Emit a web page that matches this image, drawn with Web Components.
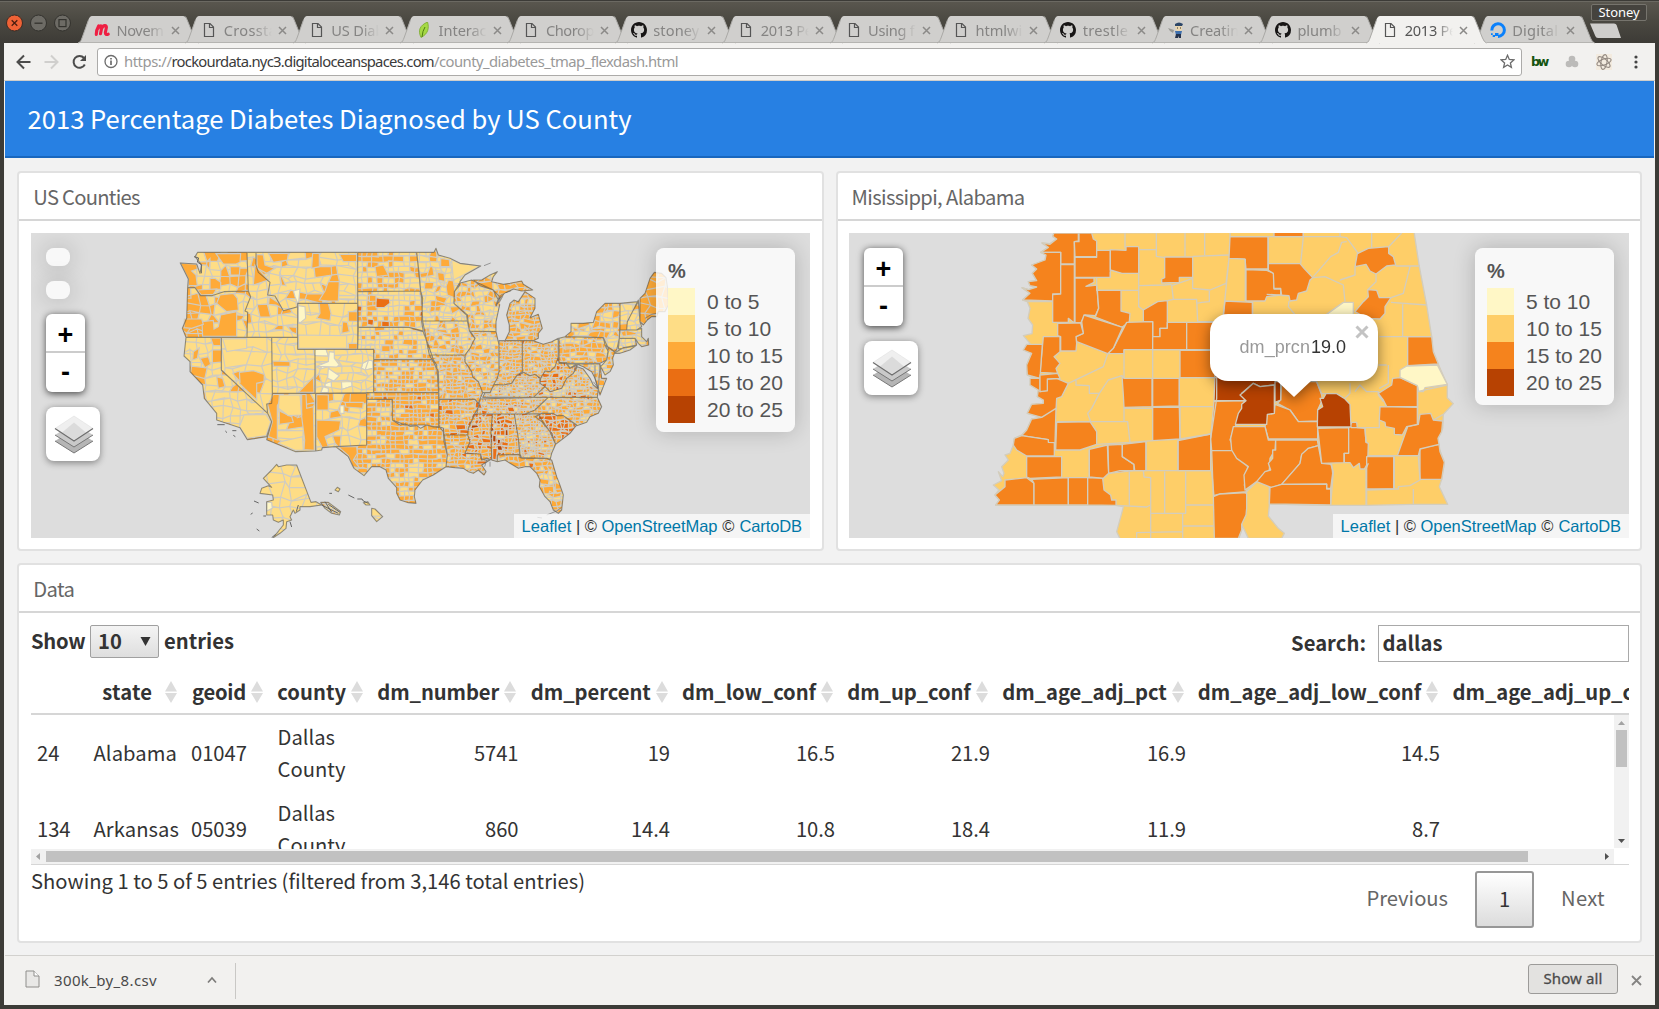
<!DOCTYPE html>
<html lang="en">
<head>
<meta charset="utf-8">
<title>2013 Percentage Diabetes Diagnosed by US County</title>
<style>
html,body{margin:0;padding:0;width:1659px;height:1009px;overflow:hidden;background:#3c3b37}
</style>
</head>
<body>
<browser-window>
  <tab-strip slot="tabs">
    <browser-tab icon="meetup" n="Novem"></browser-tab>
    <browser-tab icon="doc" n="Crossta"></browser-tab>
    <browser-tab icon="doc" n="US Diab"></browser-tab>
    <browser-tab icon="leaf" n="Interac"></browser-tab>
    <browser-tab icon="doc" n="Chorop"></browser-tab>
    <browser-tab icon="github" n="stoney"></browser-tab>
    <browser-tab icon="doc" n="2013 Pe"></browser-tab>
    <browser-tab icon="doc" n="Using f"></browser-tab>
    <browser-tab icon="doc" n="htmlwi"></browser-tab>
    <browser-tab icon="github" n="trestle"></browser-tab>
    <browser-tab icon="person" n="Creatin"></browser-tab>
    <browser-tab icon="github" n="plumb"></browser-tab>
    <browser-tab icon="doc" n="2013 Pe" active></browser-tab>
    <browser-tab icon="ocean" n="Digital"></browser-tab>
  </tab-strip>
  <address-bar slot="toolbar"></address-bar>
  <dash-board slot="page"></dash-board>
  <download-bar slot="downloads"></download-bar>
</browser-window>

<script>
const SANS = '"Noto Sans CJK SC","Noto Sans CJK JP",sans-serif';
const UI = '"Noto Sans","Open Sans",sans-serif';
const fits = [];

function define(name, render, after) {
  customElements.define(name, class extends HTMLElement {
    connectedCallback() {
      if (this.shadowRoot) return;
      this.attachShadow({ mode: 'open' }).innerHTML = render(this);
      if (after) after(this);
    }
  });
}

/* Text that spreads its letters to fill a given advance width. */
define('fit-text', el => `<style>:host{display:inline-block;white-space:pre;width:${el.getAttribute('w')}px}</style><span><slot></slot></span>`, el => fits.push(el));

const f = (w, t, cls = '') => `<fit-text w="${w}" class="${cls}">${t}</fit-text>`;

/* ---------- window frame ---------- */
define('browser-window', () => `
<style>
:host{display:flex;flex-direction:column;box-sizing:border-box;width:1659px;height:1009px;overflow:hidden;background:#3c3b37;position:relative}
.body{display:flex;flex-direction:column;margin:0 4px 4px 4px;padding:0 1px;height:962px;background:#f2f1ef}
</style>
<slot name="tabs"></slot>
<div class="body"><slot name="toolbar"></slot><slot name="page"></slot><slot name="downloads"></slot></div>`);

define('tab-strip', () => `
<style>
:host{display:flex;box-sizing:border-box;height:43px;background:linear-gradient(#5a574f,#4b4942 45%,#3d3b36);border-top:1px solid #3c3b37;box-shadow:inset 0 1px #6b6962;font-family:${UI}}
.btns{display:flex;gap:7px;width:78px;box-sizing:border-box;padding:13px 0 0 6px;flex:none}
svg{display:block}
.tabs{display:flex;align-items:flex-end;flex:none}
.plus{margin:22px 0 0 8px}
.user{position:absolute;left:1591px;top:4px;width:54px;height:15px;border:1px solid #76746d;border-radius:2px;background:#45433e;color:#fff;font-size:13px;line-height:15px;text-align:center}
</style>
<div class="btns">
<svg width="17" height="18" viewBox="0 0 17 18"><circle cx="8.5" cy="9" r="8" fill="#ef6236" stroke="#3a2c25"/><path d="M5.7 6.2l5.6 5.6M11.3 6.2l-5.6 5.6" stroke="#4b1e10" stroke-width="1.3"/></svg>
<svg width="17" height="18" viewBox="0 0 17 18"><circle cx="8.5" cy="9" r="8" fill="#6d6b65" stroke="#33322e"/><path d="M4.5 9.2h8" stroke="#33322e" stroke-width="1.3"/></svg>
<svg width="17" height="18" viewBox="0 0 17 18"><circle cx="8.5" cy="9" r="8" fill="#6d6b65" stroke="#33322e"/><rect x="5" y="5.6" width="7" height="7" fill="none" stroke="#33322e" stroke-width="1.2"/></svg>
</div>
<div class="tabs"><slot></slot></div>
<svg class="plus" width="33" height="16"><path d="M1 0.5H25Q27 .5 27.6 2L32 15H9Q7 15 6.3 13Z" fill="#cfcecc"/></svg>
<div class="user">${f(41, 'Stoney')}</div>`);

const favicons = {
  doc: '<path d="M3.5 1.5H9L12.5 5V14.5H3.5Z" fill="none" stroke="#555" stroke-width="1.2"/><path d="M8.5 1.5V5.5H12.5" fill="none" stroke="#555" stroke-width="1.2"/>',
  meetup: '<path d="M2.3 12.5C2.2 9 4 5 4.7 3.8M4.2 6.2C6 2.8 8.3 3 7.7 6L6.5 11.8M7.6 6.6C9.3 2.6 13 2.8 12.3 6L11.4 10.2C11.1 12.4 12.6 13 14.2 12.2" fill="none" stroke="#ef1f43" stroke-width="3.1" stroke-linecap="round"/>',
  leaf: '<path d="M11.5 0C4 3.500 1.500 8 5 15.500C12 12 13.500 6 11.500 0Z" fill="#a5d944" stroke="#7aa92c" stroke-width=".8"/><path d="M9 5Q6.500 9 6 15" stroke="#4f7d12" fill="none"/>',
  github: '<path fill="#171515" d="M8 0C3.58 0 0 3.580 0 8c0 3.540 2.290 6.530 5.470 7.590.4.070.55-.17.55-.38 0-.19-.01-.82-.01-1.490-2.010.37-2.530-.49-2.690-.94-.09-.23-.48-.94-.82-1.130-.28-.15-.68-.52-.01-.53.63-.01 1.080.58 1.230.82.72 1.210 1.870.87 2.330.66.070-.52.28-.87.51-1.070-1.780-.2-3.640-.89-3.640-3.950 0-.87.31-1.590.82-2.150-.08-.2-.36-1.020.08-2.120 0 0 .67-.21 2.200.82.64-.18 1.320-.27 2-.27s1.360.09 2 .27c1.530-1.040 2.200-.82 2.200-.82.44 1.100.16 1.920.08 2.120.51.56.82 1.270.82 2.150 0 3.070-1.870 3.750-3.650 3.950.29.25.54.73.54 1.480 0 1.070-.01 1.930-.01 2.200 0 .21.15.46.55.38A8.010 8.010 0 0 0 16 8c0-4.420-3.580-8-8-8z"/>',
  person: '<path d="M7 2Q11-1 15 2L14 4H7Z" fill="#2d4668"/><path d="M7 4H14V8Q11 11 8 8Z" fill="#ead6b0"/><path d="M0 6L6 8L5 11L2 9Z" fill="#9a9a95"/><path d="M7 9H14L13 13H8Z" fill="#3d6fae"/><path d="M8 12H13V16H11L10.500 14L10 16H7Z" fill="#26344e"/><path d="M9 6h1M12 6h1" stroke="#333"/>',
  ocean: '<path d="M1.800 8.500A6.300 6.300 0 1 1 8 14.400" fill="none" stroke="#0a80fb" stroke-width="3"/><path d="M5 11h3.500v3H5zM2.700 13h2.300v2H2.700zM1 11.200h1.700V13H1z" fill="#0a80fb"/>'
};
const tabW = { Novem: 47, Crossta: 53, 'US Diab': 53, Interac: 48, Chorop: 48, stoney: 46, '2013 Pe': 52, 'Using f': 46.5, htmlwi: 47, trestle: 45.5, Creatin: 49, plumb: 44, Digital: 46 };

define('browser-tab', el => {
  const on = el.hasAttribute('active'), n = el.getAttribute('n'), bg = on ? '#f2f1ef' : '#d0cfcd';
  return `<style>
:host{display:block;position:relative;width:107.36px;height:27px;flex:none;z-index:${on ? 2 : 0}}
.bg{position:absolute;left:0;top:0;overflow:visible}
.row{position:relative;display:flex;align-items:center;height:27px;padding:0 0 0 16px;box-sizing:border-box}
.ic{width:16px;height:16px;margin-right:6.500px;margin-top:1px;flex:none}
.t{width:54px;font-size:14.600px;line-height:22px;color:${on ? '#555' : '#858483'};-webkit-mask-image:linear-gradient(90deg,#000 30px,transparent 48px);mask-image:linear-gradient(90deg,#000 30px,transparent 48px);flex:none}
.x{margin-left:0;flex:none;margin-top:1px}
</style>
<svg class="bg" width="121" height="27"><path d="M0 27C3 26 3 24 4 22L10.500 3.500Q11.800 0 14 0H105Q107.500 0 109 3.500L116.500 22Q118 26 121 27Z" fill="${bg}"/><path d="M107.500 0.500Q108.500 2 109 3.500L116.500 22Q118 26 120.500 27M0 27C3 26 3 24 4 22L10.500 4" fill="none" stroke="#aaa9a6"/>${on ? '' : '<path d="M1 26.500H120" stroke="#b5b4b1"/>'}</svg>
<div class="row"><svg class="ic" viewBox="0 0 16 16">${favicons[el.getAttribute('icon')]}</svg><div class="t">${f(tabW[n], n)}</div>
<svg class="x" width="9" height="9"><path d="M1 1L8 8M8 1L1 8" stroke="#8b8a88" stroke-width="1.500"/></svg></div>`;
});

define('address-bar', () => `
<style>
:host{display:flex;align-items:center;box-sizing:border-box;height:38px;background:#f2f1ef;border-bottom:1px solid #cfcecb;padding:0 10px 0 11.500px;font-family:${UI};margin:0 -1px}
.nav{display:flex;gap:13px;width:81.500px}
.box{display:flex;align-items:center;box-sizing:border-box;width:1425px;height:28px;background:#fff;border:1px solid #acaba9;border-radius:3px;padding:0 6px;font-size:14.800px;color:#999}
.url{margin-left:6px;flex:1;display:flex;line-height:24px;padding-bottom:1px}
b{font-weight:400;color:#3a3a3a}
.ext{display:flex;align-items:center;margin-left:9px}
.bw{font:900 12.500px/16px "DejaVu Sans",sans-serif;color:#15540f;width:17px;padding-top:1px}
</style>
<div class="nav">
<svg width="15" height="16"><path d="M14.500 8H2M8 1.500L1.500 8L8 14.500" fill="none" stroke="#4c4c4b" stroke-width="2"/></svg>
<svg width="15" height="16"><path d="M.5 8H13M7 1.500L13.500 8L7 14.500" fill="none" stroke="#d0cfcd" stroke-width="2"/></svg>
<svg width="15" height="16"><path d="M12.800 10.500A5.900 5.900 0 1 1 12 4" fill="none" stroke="#4c4c4b" stroke-width="2"/><path d="M14 1V7H8Z" fill="#4c4c4b"/></svg>
</div>
<div class="box">
<svg width="14" height="15"><circle cx="7" cy="7.500" r="6" fill="none" stroke="#6d6d6d" stroke-width="1.300"/><path d="M7 6.500V11M7 4V5.600" stroke="#6d6d6d" stroke-width="1.700"/></svg>
<div class="url">${f(47.5, 'https://')}<b>${f(262.500, 'rockourdata.nyc3.digitaloceanspaces.com')}</b>${f(244, '/county_diabetes_tmap_flexdash.html')}</div>
<svg width="15" height="15" viewBox="0 0 15 15"><path d="M7.500 1.300L9.300 5.500L13.800 5.900L10.400 8.900L11.400 13.300L7.500 11L3.600 13.300L4.600 8.900L1.200 5.900L5.700 5.500Z" fill="none" stroke="#6b6b6b" stroke-width="1.300"/></svg>
</div>
<div class="ext"><span class="bw">${f(16, 'bw')}</span>
<svg width="14" height="14" style="margin-left:17px"><circle cx="7" cy="4" r="3.300" fill="#bcbbb9"/><circle cx="4" cy="9" r="3.300" fill="#bcbbb9"/><circle cx="10" cy="9" r="3.300" fill="#bcbbb9"/></svg>
<svg width="18" height="18" viewBox="0 0 18 18" style="margin-left:16px"><rect x="1" y="1" width="16" height="16" fill="#f3ebdf"/><g fill="none" stroke="#948a82" stroke-width="1.100"><ellipse cx="9" cy="9" rx="3" ry="7.500" transform="rotate(10 9 9)"/><ellipse cx="9" cy="9" rx="3" ry="7.500" transform="rotate(70 9 9)"/><ellipse cx="9" cy="9" rx="3" ry="7.500" transform="rotate(130 9 9)"/></g></svg>
<svg width="4" height="16" style="margin-left:21px"><circle cx="2" cy="3" r="1.600" fill="#444"/><circle cx="2" cy="8" r="1.600" fill="#444"/><circle cx="2" cy="13" r="1.600" fill="#444"/></svg></div>`);

/* ---------- dashboard ---------- */
define('dash-board', () => `
<style>
:host{display:flex;flex-direction:column;height:874px;background:#f2f2f2;font-family:${SANS};color:#333}
header{box-sizing:border-box;height:77px;flex:none;background:#2780e3;border-bottom:2px solid #1967be;color:#fff;font-size:25.600px;line-height:40px;padding:17px 0 0 22.500px}
main{display:flex;flex-direction:column;gap:12px;padding:13px 12px 0 12px}
.row{display:flex;gap:12px}
</style>
<header>${f(604, '2013 Percentage Diabetes Diagnosed by US County')}</header>
<main>
<div class="row">
<dash-card h="380" w="807" name="US Counties" nw="106.500"><leaflet-map kind="us"></leaflet-map></dash-card>
<dash-card h="380" w="806" pl="11" name="Misissippi, Alabama" nw="173"><leaflet-map kind="south"></leaflet-map></dash-card>
</div>
<dash-card h="380" w="1625" name="Data" nw="41"><data-table></data-table></dash-card>
</main>`);

define('dash-card', el => `
<style>
:host{display:flex;flex-direction:column;box-sizing:border-box;width:${el.getAttribute('w')}px;height:${el.getAttribute('h')}px;background:#fff;border:2px solid #e1e1e1;border-radius:4px;flex:none}
h2{margin:0;box-sizing:border-box;height:48px;flex:none;border-bottom:2px solid #d6d6d6;font-weight:400;font-size:20.200px;line-height:30px;color:#666;padding:9px 0 0 ${el.getAttribute('pl') ? 13.5 : 14.3}px}
.in{padding:12px 12px 12px ${el.getAttribute('pl') || 12}px}
</style><h2>${f(el.getAttribute('nw'), el.getAttribute('name'))}</h2><div class="in"><slot></slot></div>`);

/* ---------- Leaflet-style widgets ---------- */
define('zoom-control', () => `
<style>:host{display:flex;flex-direction:column;width:39px;height:78px;background:#fff;border-radius:6px;box-shadow:0 1.500px 7px rgba(0,0,0,.65);overflow:visible;font:bold 27px/42px "Liberation Sans",Arial,sans-serif;color:#000;text-align:center}
div{height:37px}div+div{border-top:2px solid #ccc;height:39px;line-height:39px;box-sizing:content-box;margin-bottom:-2px}</style><div>+</div><div>-</div>`);
define('layers-control', () => `
<style>:host{display:flex;align-items:center;justify-content:center;width:54px;height:54px;background:#fff;border-radius:8px;box-shadow:0 1.500px 7px rgba(0,0,0,.4)}</style>
<svg width="40" height="40" viewBox="0 0 40 40" style="margin-left:1px"><path d="M1 27L20 15L39 27L20 39Z" fill="#b5b5b5"/><path d="M1 27L20 39L39 27" fill="none" stroke="#777"/><path d="M1 21L20 9L39 21L20 33Z" fill="#c9c9c9"/><path d="M1 21L20 33L39 21" fill="none" stroke="#777"/><path d="M1 14.500L20 2L39 14.500L20 27Z" fill="#efefef" stroke="#ddd" stroke-width=".5"/><path d="M8 18.500L20 8.500L32 18.500L20 26Z" fill="#dbdbdb"/><path d="M1 14.500L20 27L39 14.500" fill="none" stroke="#6e6e6e" stroke-width="1.200"/></svg>`);
define('map-legend', el => {
  const rows = el.getAttribute('rows').split(',').map(r => r.split(':'));
  return `<style>:host{display:block;box-sizing:border-box;width:139px;background:rgba(255,255,255,.8);border-radius:8px;box-shadow:0 0 22px rgba(0,0,0,.2);padding:12px 12px 9px;font:21px/27px "Liberation Sans",Arial,sans-serif;color:#555}
b{display:block;height:28px;line-height:22px;font-size:20px}.r{display:flex;height:27px}i{width:27px;height:27px;margin-right:12px}</style><b>%</b>${rows.map(r => `<div class="r"><i style="background:${r[0]}"></i>${r[1]}</div>`).join('')}`;
});
define('map-popup', () => `
<style>:host{display:block;width:168px;height:85px;filter:drop-shadow(0 4px 7px rgba(0,0,0,.45));font:18px/66px "Liberation Sans",Arial,sans-serif;color:#333}
.b{display:flex;height:67px;background:#fff;border-radius:18px;box-sizing:border-box;padding:0 9.500px 0 29.500px;justify-content:space-between}
.g{color:#999;margin-right:1px}.tip{display:block;margin:-1px auto 0}.c{margin-top:11px}</style>
<div class="b"><div>${f(70.500, 'dm_prcn', 'g')}${f(35, '19.0')}</div><svg class="c" width="14" height="14"><path d="M1.500 1.500L12.500 12.500M12.500 1.500L1.500 12.500" stroke="#c3c3c3" stroke-width="3"/></svg></div>
<svg class="tip" width="36" height="18"><path d="M0 0H36L18 17Z" fill="#fff"/></svg>`);

/* Deterministic pseudo random numbers keep the county mesh stable. */
let seed = 20137;
const rnd = () => (seed = (seed * 16807) % 2147483647) / 2147483647;
const COL = ['#fff7c6', '#fedd86', '#feaa38', '#ea6e13', '#b74202'];

/* [x offset, county size, colour weights, outline] */
const W = 0, E = 1230;
const STATES = [
 [W,25,[0,65,35],'593,262 741,262 745,378 672,380 635,392 602,392 585,368 563,367 565,342 541,294 590,297 600,325 605,300 585,275'],
 [W,27,[0,50,50],'563,367 585,368 602,392 635,392 672,380 745,378 752,395 735,438 743,442 741,517 558,517 547,490 560,460'],
 [W,24,[0,86,14],'558,517 664,517 664,615 803,745 815,770 800,815 742,824 720,788 650,765 650,745 613,700 608,660 570,620 570,590 552,573'],
 [W,42,[0,96,4],'664,517 815,517 817,685 815,715 800,717 803,745 664,615'],
 [W,24,[0,84,16],'741,262 768,262 768,300 775,322 810,352 803,390 825,393 850,437 893,425 893,517 741,517 743,442 735,438 752,395 745,378'],
 [W,25,[0,78,22],'768,262 1073,262 1073,415 893,415 893,425 850,437 825,393 803,390 810,352 775,322 768,300'],
 [W,34,[0,100,0],'893,415 1073,415 1073,553 893,553'],
 [W,26,[0,90,10],'815,517 893,517 893,553 945,553 945,685 817,685'],
 [W,20,[7,92,1],'945,553 1121,553 1121,683 945,685'],
 [W,36,[0,75,25],'817,685 947,685 947,858 887,860 800,824 815,770 803,745 800,717 815,715'],
 [W,27,[0,80,20],'947,685 1100,685 1100,840 1007,845 967,848 965,855 947,858'],
 [W,16,[0,50,50],'1073,262 1250,262 1262,378 1073,380'],
 [W,16,[0,62,37,1],'1073,380 1262,378 1268,400 1265,470 1270,500 1225,487 1075,487'],
 [W,14,[0,72,28],'1075,487 1225,487 1268,497 1285,540 1300,584 1121,584 1121,553 1073,553'],
 [W,12.500,[0,32,68],'1121,584 1300,584 1310,600 1316,683 1121,683'],
 [W,13,[0,10,83,7],'1100,683 1316,683 1316,788 1280,780 1215,780 1177,765 1177,703 1100,703'],
 [W,14,[0,36,64],'1100,703 1177,703 1177,765 1200,780 1215,776 1230,784 1250,782 1262,790 1280,780 1300,786 1318,785 1330,800 1332,830 1342,870 1338,905 1300,930 1268,945 1245,975 1243,995 1248,1015 1225,1013 1200,1005 1190,985 1190,968 1165,940 1158,915 1140,905 1115,905 1092,932 1062,910 1045,875 1007,845 1100,840'],
 [E,15,[0,80,20],'20,262 72,262 78,250 85,270 120,280 150,295 212,303 165,330 150,350 148,362 133,380 132,415 170,450 172,468 38,468 35,400 32,378 28,330'],
 [E,12.500,[0,50,50],'38,468 172,468 178,495 195,520 180,550 165,570 58,570 48,520'],
 [E,11,[0,22,77,1],'58,570 165,570 165,590 185,620 188,636 205,650 218,683 210,702 205,715 195,703 87,703 85,620 70,590'],
 [E,11.500,[0,8,80,12],'87,703 195,703 205,715 210,718 195,745 175,790 173,810 102,810 100,790 87,785'],
 [E,11.500,[0,12,80,8],'102,810 173,810 180,830 165,865 212,867 212,880 225,885 240,885 215,900 228,920 222,930 205,915 190,925 175,920 160,910 135,908 108,905 112,870'],
 [E,13.500,[0,66,34],'148,355 185,345 250,375 268,395 258,420 280,395 270,415 258,470 258,500 178,498 172,450 132,415 133,380'],
 [E,19,[0,15,85],'190,345 215,345 240,330 262,320 250,335 245,350 280,358 300,355 335,348 340,358 368,375 335,378 310,372 285,385 265,405 250,375 210,362'],
 [E,12.500,[0,20,80],'300,415 312,405 325,410 345,380 375,400 375,430 360,458 385,448 397,490 385,505 385,520 370,527 285,527 298,500 298,480 290,450'],
 [E,11.500,[0,50,50],'178,498 258,500 267,540 267,620 262,640 252,658 240,683 218,683 205,650 188,636 185,620 165,590 165,570 180,550 195,520'],
 [E,10,[0,20,79,1],'267,527 337,527 337,625 320,632 305,655 280,660 252,658 262,640 267,620'],
 [E,10,[0,20,79,1],'337,527 370,527 400,538 425,530 445,520 445,575 435,605 420,620 405,618 392,640 375,628 360,632 337,620'],
 [E,8.500,[0,22,70,8],'218,697 225,683 240,683 252,658 280,660 305,655 320,632 337,620 360,632 375,628 390,640 390,655 405,665 370,697'],
 [E,9,[0,18,76,6],'210,702 370,697 415,697 395,715 375,735 345,747 200,747'],
 [E,11,[0,3,58,38,1],'195,747 247,747 243,800 245,885 230,880 215,885 212,867 165,865 180,830 173,810 175,790'],
 [E,11,[0,6,52,35,7],'247,747 313,747 325,820 330,868 262,870 262,890 245,885 243,800'],
 [E,8.500,[0,26,67,7],'313,747 385,747 395,765 420,800 437,838 425,865 420,885 410,880 330,878 325,820'],
 [E,13,[0,22,76,2],'262,870 330,868 335,880 410,880 425,885 440,935 448,955 460,990 455,1035 445,1045 430,1035 420,1010 405,995 388,965 390,945 380,925 360,905 345,905 325,910 300,895 285,885 262,890'],
 [E,11.500,[0,5,57,38],'375,755 395,745 430,745 440,752 460,752 500,780 480,805 437,838 425,805 395,770'],
 [E,10.500,[0,22,70,8],'415,697 562,697 575,725 565,745 540,755 530,772 500,782 460,752 440,752 430,745 345,747 375,735'],
 [E,9,[0,42,54,4],'370,697 405,665 420,680 455,670 470,640 490,625 502,605 520,612 540,640 550,660 565,672 562,697'],
 [E,10.500,[0,5,65,30],'392,640 405,618 420,620 435,605 445,575 447,593 470,593 480,610 502,600 490,625 470,640 455,670 420,680 405,665 390,655'],
 [E,13,[0,20,80],'447,520 465,515 580,518 595,550 590,585 570,595 447,595'],
 [E,11,[0,50,49,1],'470,597 570,597 575,640 590,640 580,665 570,690 560,655 555,640 545,620 520,605 500,597 480,610'],
 [E,12,[0,70,30],'585,540 615,560 608,580 610,600 600,620 585,630 572,605 590,585 595,560'],
 [E,15,[0,60,40],'465,515 483,500 483,475 520,475 550,472 560,440 585,415 630,415 630,460 628,520 620,555 612,560 585,540 580,518'],
 [E,15,[0,90,10],'612,565 640,548 680,540 660,555 630,565'],
 [E,15,[0,75,25],'630,415 685,410 670,435 652,470 650,495 630,495'],
 [E,16,[0,65,35],'685,405 690,470 695,485 680,495 650,495 652,470 670,435'],
 [E,14,[0,88,12],'630,495 680,495 695,490 695,515 710,530 715,520 716,540 695,545 685,535 675,520 628,520'],
 [E,14,[0,90,10],'628,520 675,520 680,540 665,545 625,552'],
 [E,26,[0,5,95],'690,400 705,385 720,340 733,322 755,325 768,338 773,370 775,420 765,440 745,440 740,455 725,455 712,465 700,480 690,470'],
 [W,34,[0,100,0],'830,898 835,905 860,900 890,900 933,1012 948,1010 965,1020 930,1025 900,1025 900,1035 885,1045 880,1035 870,1055 875,1065 860,1070 858,1090 840,1105 820,1118 838,1095 850,1080 850,1065 835,1072 820,1065 818,1050 800,1050 800,1010 820,1005 818,990 780,985 785,970 805,962 815,967 790,940 815,915'],
 [W,8,[0,70,30],'962,1012 985,1012 1022,1040 1018,1050 995,1045 975,1030'],
 [W,40,[0,100,0],'1115,1030 1125,1032 1148,1055 1130,1070 1115,1052'],
 [W,20,[0,100,0],'1090,1013 1103,1010 1110,1020 1098,1020'],
 [W,20,[0,100,0],'1005,975 1012,967 1020,972 1015,980']
];
/* Conspicuous counties laid over the mesh: colour index, x offset, outline */
const SPOTS = [
 [2,W,'648,266 722,266 720,292 708,297 670,297'],[2,W,'630,340 645,340 662,352 662,372 630,375'],[2,W,'690,305 720,305 718,330 692,330'],[2,W,'541,294 590,298 592,312 575,318 588,330 592,362 565,362 565,342'],[2,W,'592,375 650,372 640,388 604,390'],
 [2,W,'660,390 700,385 712,400 715,435 680,440 650,415'],[2,W,'606,470 640,466 642,492 655,485 662,450 710,440 710,514 608,514'],[2,W,'553,462 605,462 610,478 575,490 552,488'],[2,W,'632,519 662,519 662,542 640,542'],
 [2,W,'718,622 760,617 793,628 792,650 770,655 770,705 735,672 718,655'],[2,W,'698,625 718,618 720,650'],[2,W,'580,560 598,548 592,580 578,585'],[2,W,'600,580 625,575 632,598 615,608'],[2,W,'650,635 668,640 675,665 655,670'],
 [2,W,'805,265 865,265 862,285 820,292'],[2,W,'938,265 958,265 958,305 935,310'],[2,W,'1018,268 1070,268 1070,290 1030,290'],[2,W,'985,350 1018,350 1015,408 985,408 958,405 975,378'],[2,W,'770,268 790,270 795,300 825,310 800,325 772,310'],[2,W,'765,300 805,345 760,360'],[2,W,'838,320 845,360 858,362'],[2,W,'808,395 838,415 845,430 828,420 806,418'],
 [2,W,'1045,440 1072,440 1072,470 1045,468'],[2,W,'1028,470 1042,472 1048,500 1025,505'],[2,W,'1045,535 1072,535 1072,552 1045,552'],[2,W,'958,415 985,415 993,445 990,467 950,460 960,445'],
 [2,W,'862,485 890,487 890,508 875,500'],[2,W,'818,588 870,590 870,604 820,604'],
 [2,W,'820,688 850,688 832,722 832,825 805,815 817,770 803,720'],[2,W,'905,688 918,688 920,730 940,725 943,856 912,854 914,825 905,755'],[2,W,'838,738 875,755 880,772 838,778'],[2,W,'940,636 942,682 895,682'],
 [2,W,'950,688 985,690 985,735 950,735'],[2,W,'950,765 1022,768 1018,795 975,815 985,845 967,848 950,815'],[2,W,'1035,712 1090,712 1088,730 1038,726'],
 [2,W,'1015,845 1070,845 1072,865 1060,885 1080,910 1058,905 1045,872'],[1,W,'732,750 798,748 812,770 798,812 742,820 718,785'],[1,W,'668,522 740,520 740,550 680,560'],
 [1,W,'838,690 900,690 905,750 865,752 835,730'],[1,W,'842,830 908,815 910,855 885,856 835,835'],[1,W,'895,510 1040,512 1040,550 896,550'],
 [0,W,'895,422 915,425 917,460 900,474 895,470'],[0,W,'880,378 900,372 895,420 885,395'],[0,W,'985,610 1018,632 1002,648 983,640'],[0,W,'988,560 1003,562 1003,580 1018,600 1010,606 950,604 985,590'],[0,W,'1020,722 1032,722 1032,746 1020,744'],[0,W,'970,665 985,670 985,683 962,683'],
 [3,W,'1128,398 1140,400 1168,402 1170,415 1152,428 1128,428'],[3,W,'1145,468 1168,470 1168,485 1145,485'],[3,W,'1103,462 1121,464 1119,482 1103,478'],[2,W,'1145,542 1170,542 1170,560 1145,560'],[0,W,'800,1012 815,1012 817,1030 800,1038'],
 [2,W,'1125,305 1150,300 1165,330 1130,335'],[2,W,'1108,390 1128,392 1128,408 1108,410'],
 [1,E,'125,285 150,295 210,303 160,330 130,345'],[2,E,'92,280 118,284 120,305 92,305'],[2,E,'115,345 130,348 138,400 112,390 108,365'],[2,E,'82,322 102,325 105,350 85,345'],[2,E,'45,352 72,352 68,372 43,372'],[2,E,'60,305 68,305 72,330 50,335'],
 [4,E,'248,810 258,812 258,832 248,830'],[4,E,'262,822 272,824 270,838 262,836'],[4,E,'260,842 275,842 278,856 264,856'],[3,E,'248,850 262,850 258,885 248,882'],[3,E,'355,893 372,895 368,910 358,905'],[3,E,'197,710 208,712 205,728 195,730']
];
function mesh() {
  let defs = '', body = '', lines = '';
  STATES.forEach(([ox, s, w, pts], i) => {
    const P = pts.split(' ').map(p => p.split(',').map(Number)).map(([x, y]) => [x + ox, y]);
    const d = 'M' + P.map(p => p.join(' ')).join('L') + 'Z';
    const xs = P.map(p => p[0]), ys = P.map(p => p[1]);
    const x0 = Math.min(...xs) - 4, x1 = Math.max(...xs), y0 = Math.min(...ys) - 4, y1 = Math.max(...ys);
    const nx = Math.ceil((x1 - x0) / s) + 1, ny = Math.ceil((y1 - y0) / s) + 1, j = s > 18 ? .75 : ox ? .8 : .35;
    const V = [];
    for (let r = 0; r <= ny; r++) { V.push([]); for (let c = 0; c <= nx; c++) V[r].push([x0 + (c + (rnd() - .5) * j) * s, y0 + (r + (rnd() - .5) * j) * s]); }
    const tot = w.reduce((a, b) => a + b, 0), out = ['', '', '', '', ''];
    for (let r = 0; r < ny; r++) for (let c = 0; c < nx; c++) {
      let k = rnd() * tot, n = 0; while (n < w.length - 1 && k > w[n]) { k -= w[n]; n++; }
      const wide = rnd() < .22 && c + 2 <= nx;
      const q = [V[r][c], V[r][wide ? c + 2 : c + 1], V[r + 1][wide ? c + 2 : c + 1], V[r + 1][c]];
      out[n] += 'M' + q.map(p => p[0].toFixed(1) + ' ' + p[1].toFixed(1)).join('L') + 'Z';
      if (wide) c++;
    }
    defs += `<clipPath id="s${i}"><path d="${d}"/></clipPath>`;
    body += `<g clip-path="url(#s${i})"><path d="${d}" fill="${COL[1]}"/>${out.map((o, n) => o ? `<path d="${o}" fill="${COL[n]}"/>` : '').join('')}</g>`;
    lines += d;
  });
  const spots = SPOTS.map(([c, ox, p]) => `<polygon transform="translate(${ox} 0)" points="${p}" fill="${COL[c]}"/>`).join('');
  return `<svg width="779" height="305" viewBox="93 204 2337 915"><defs>${defs}</defs><g stroke="#cecbc3" stroke-width="3.500">${body}${spots}</g>
<path d="${lines}" fill="none" stroke="#4a4944" stroke-opacity=".55" stroke-width="3.300" stroke-linejoin="round"/>
<g fill="none" stroke="#666" stroke-width="3"><path d="M582 275l14 4l-4 12l12 8v26M652 779h22M676 798l5 5M697 797h12M700 811l6 4M762 1008l14 6M752 1048l6-4M770 1092l8 6M815 1118l12-10M1045 990l18 9M1072 1002h14l4 6l15 7M988 985h8M790 1053h8M965 1020l50 25M975 1010l20 32M985 1018l35 24M870 1070l5 16M895 1020l-6 20"/><path stroke-opacity=".6" d="M1452 302l20-8M1488 425l15-35l30-13M1785 600v40l8 30M1800 600l-5 70l-15-20M1460 885l-6 20M1470 890v15M1612 1057l14 2M1640 1050l30-12l14-10M1935 460l20-12l20-4"/></g>
<path d="M1500 418l16-30l34-8" fill="none" stroke="#dedede" stroke-width="6"/></svg>`;
}

/* Mississippi and Alabama county outlines; M is the western sheet, A the eastern one */
const ORANGE_M = ['672,204 745,204 745,228 733,230 733,297 692,297 692,262 632,262 655,247 636,234 660,238 680,222 668,214','747,204 785,204 790,222 800,228 800,275 735,275 733,230 747,230','735,277 800,277 800,256 841,256 841,337 735,337','632,262 692,262 692,387 668,387 668,408 578,405 600,385 576,368 596,374 620,366 600,362 595,350 620,347 607,325 620,312 605,300 645,285 648,270','692,299 733,299 733,474 715,460 715,472 668,472 668,389 692,387','735,339 792,339 792,352 768,364 800,360 806,430 796,452 765,450 752,474 735,474','802,376 873,376 873,438 900,445 898,470 876,487 796,456 806,430','841,254 888,256 888,245 926,245 926,325 876,325 841,315','1004,276 1088,276 1088,337 1048,337 1048,352 995,354 995,342 1004,338','983,410 1012,407 1012,490 990,490 990,515 968,515 968,470 940,470 940,435','890,472 968,470 968,554 882,554 882,566 833,566 850,550','762,450 878,487 850,550 833,566 740,530 738,515 760,505 755,470','683,475 735,474 752,474 760,505 738,515 740,535 738,558 692,558 692,515 683,512','640,515 690,515 690,560 672,575 690,595 678,610 683,625 630,622','590,538 637,538 630,640 592,630 590,600 605,565 580,555','968,515 990,515 990,490 1012,490 1012,472 1070,472 1070,554 968,554','1070,472 1250,472 1250,554 1070,554','1050,556 1250,556 1250,638 1050,638','600,640 630,640 630,680 652,677 652,642 680,640 715,655 695,695 680,700 678,735 665,745 635,757 592,745 605,718 640,715 640,705 622,695 625,675 600,660','630,630 683,625 690,640 652,642 652,677 630,680','876,632 882,640 966,640 966,725 882,727 880,690','968,640 1048,640 1048,723 968,725','968,727 1048,727 1050,822 968,827','635,757 678,730 675,833 655,832 655,824 575,812 590,795 605,762','575,812 655,824 655,832 673,833 673,873 590,873 560,855 550,840 553,820','680,772 780,770 800,800 800,838 750,855 677,855','590,875 695,875 695,936 600,940 590,936','778,853 832,840 836,925 820,940 778,936','834,840 877,838 877,875 912,898 912,917 836,925','877,838 948,830 948,917 914,917 912,898 877,875','1044,827 1142,807 1142,917 1044,917','590,938 612,955 612,1020 497,1020 508,1005 495,990 525,965 525,945','605,943 715,938 715,1020 612,1020 612,955','715,938 773,938 773,1020 715,1020','773,938 818,940 822,975 842,990 845,1005 858,1005 858,1021 773,1020','1152,709 1245,707 1235,725 1235,745 1218,780 1210,795 1200,825 1218,857 1145,857 1142,820','1145,857 1218,857 1235,885 1253,905 1250,940 1243,960 1250,980 1170,987 1150,992','1150,995 1170,987 1250,983 1250,1030 1248,1050 1235,1078 1235,1095 1225,1120 1153,1120','1200,215 1314,215 1314,312 1248,312 1245,282 1197,280','1185,408 1268,412 1268,470 1178,470'];
const ORANGE_A = ['18,314 80,316 102,325 102,372 122,372 122,390 80,395 75,408 18,408','102,200 190,200 190,215 102,215','85,296 180,296 192,310 218,338 210,345 200,378 175,385 170,405 150,408 147,392 125,392 122,370 102,370 100,325 85,316','352,266 385,250 446,245 446,265 460,275 467,300 440,303 408,327 390,318 378,298 345,305','383,374 410,376 418,398 453,398 435,425 435,445 420,462 380,460 345,440 370,410 385,395','503,515 575,515 580,560 595,597 503,602','125,650 230,650 245,690 247,705 233,735 233,768 175,770 150,735 112,715 122,705','105,718 150,735 175,770 233,770 233,822 85,822 75,785 82,748 103,745','-20,785 75,785 85,825 107,825 105,855 90,880 88,915 50,950 15,975 12,930 25,905 -10,880 -25,855 -28,820','107,825 232,825 235,842 205,850 185,870 180,895 125,958 95,968 50,950 75,920 92,915 85,895 98,880 98,855 107,855','235,842 245,895 275,898 278,925 272,970 260,970 260,957 125,958 180,895 185,868 205,850','90,968 125,958 260,958 260,972 272,972 272,1020 88,1017','233,790 326,788 326,865 312,865 312,893 245,895','326,788 336,772 350,772 352,788 375,790 378,832 385,835 383,895 373,912 360,912 358,895 340,908 330,893 313,893 313,865 326,865','380,875 461,875 461,972 380,975','540,850 597,838 600,860 613,892 605,943 540,943','503,785 535,778 540,748 572,745 580,765 608,768 605,800 594,820 597,838 540,852 535,872 472,872','415,685 455,660 458,640 480,638 532,662 532,725 440,725 430,705','420,725 532,727 532,778 500,785 487,810 463,808 463,790 437,785 435,772 418,765'];
const DARK_A = ['-74,600 125,600 125,650 103,660 60,665 40,655 5,685 15,707 -78,707','12,680 40,655 60,665 103,660 103,745 82,748 80,778 -14,778 -5,745 5,730 5,718 18,707 0,690','105,650 122,650 122,705 105,712','240,700 250,700 258,686 290,686 313,700 330,718 333,786 232,786 233,735 248,725'];
const PALE_A = ['310,412 340,412 340,455 250,455','480,615 500,603 592,600 622,658 555,668 550,680 536,680 532,662 480,637'];
const poly = (list, c) => list.map(p => `<polygon points="${p}" fill="${c}"/>`).join('');
function south() {
  return `<svg width="780" height="305" viewBox="57 204 2340 915"><g stroke="#d3cdbd" stroke-width="4" stroke-linejoin="round">
<path fill="#fece68" d="M672 204L668 214L680 222L660 236L636 234L655 247L632 262L648 270L645 285L605 300L620 312L607 325L620 347L595 350L600 362L620 366L596 374L576 368L600 385L578 405L592 410L600 430L594 460L608 480L606 506L580 512L600 535L580 555L605 565L590 600L592 630L612 640L600 660L625 675L622 695L640 705L640 715L605 718L592 745L635 757L605 762L590 795L575 810L553 820L550 840L540 865L525 870L535 885L515 905L522 925L518 935L505 920L515 947L490 960L507 975L495 990L508 1005L497 1021L858 1021L880 1025L875 1045L860 1100L872 1125L1225 1125L1235 1095V1078L1255 1120L1355 1120L1363 1105L1345 1090L1315 1053L1320 1000L1318 965V1017L1502 1021L1610 1021L1750 1018L1853 1018L1828 965L1835 943L1843 892L1827 850L1824 820L1838 790L1840 748L1870 716L1852 698L1852 660L1825 598L1808 555L1805 515L1790 420L1768 305L1752 200Z"/>
${poly(ORANGE_M, '#f5831d')}<g transform="translate(1230 0)">${poly(ORANGE_A, '#f5831d')}${poly(DARK_A, '#b74202')}${poly(PALE_A, '#fff7c6')}</g>
<g fill="none"><path d="M885 204V250M979 204V274L1004 278M1065 204V274M1124 204V270M926 254H979M1088 274L1197 270M1088 337V370L1140 375L1188 355L1197 280M1025 362L1088 340M926 362L1004 360L1025 358M926 254V425L940 435M873 376H926M841 320V337M800 339V376H873M1025 360L1030 403L1012 407M1030 403H1100L1103 470M1100 403V415L1115 412L1138 410V378M1103 470H1178M592 410H668M882 554V640M968 554V640M968 554H1050M1048 640V725L1148 725M1050 725V822L1142 807M1048 638H1160V700L1142 820M833 566L820 605L715 655M738 645V660L778 662V685L808 685L785 730L773 745L782 770M808 685L835 645L876 632M680 770H893L900 832L800 838M882 727V770M882 730H966M900 832L968 827M948 830V917M1044 827V917M778 855V936M836 925L870 917H1142M898 920V1021M940 917L942 936L962 938V1120M1004 920V1043M1067 920V1020M962 1045H1058M1058 1120V1045L1067 1045V1020H1150M1058 1083H1150M920 1120V1103L1058 1100M1145 917L1152 995M858 1021L950 1026L962 1020M1197 280L1178 470M1200 215V204"/>
<path transform="translate(1230 0)" d="M-30 215H300V204M190 204V215L182 296M85 215V296M300 215L320 218L355 266M320 230L305 232L295 262L272 275L220 335M395 204V248M485 204L446 245M467 303H540M218 338L255 335L310 360L315 410M300 345L345 330V305M147 408L145 425L170 455M80 388L147 392M510 305L490 385L453 398M453 412L560 420M488 418V515M418 515H575M408 327V350L383 374M37 412V455M440 600H415M445 600V655L418 670M533 665V780M532 680L622 660M580 765L610 748M315 700L330 685V655M345 680L360 660L380 680H415V690L430 710M230 650L245 686L258 686M418 765V788H333M375 790L378 832M383 872H540M463 875V972M535 875L540 945L510 962L475 965V972H380V1020M520 972V1018M385 895L378 912V1020M272 1020L280 920L272 896M16 282V408M50 950L15 985"/></g></g></svg>`;
}

define('leaflet-map', el => {
  const us = el.getAttribute('kind') === 'us';
  return `<style>
:host{display:block;position:relative;width:${us ? 779 : 780}px;height:305px;background:#ddd;overflow:hidden}
.ctl{position:absolute;left:15px;top:15px;display:flex;flex-direction:column;gap:15px}
.pill{width:24px;height:18px;border-radius:8px;background:rgba(255,255,255,.8);box-shadow:0 0 22px rgba(0,0,0,.2)}
map-legend{position:absolute;right:15px;top:15px}
.at{position:absolute;right:0;bottom:0;width:296px;height:24px;box-sizing:border-box;padding-left:7.500px;background:rgba(255,255,255,.7);font:16.500px/24px "Liberation Sans",Arial,sans-serif;color:#333;white-space:nowrap}
a{color:#0078a8}map-popup{position:absolute;left:361px;top:81px}svg{display:block}
</style>
${us ? mesh() : south()}
<div class="ctl">${us ? '<div class="pill"></div><div class="pill"></div>' : ''}<zoom-control></zoom-control><layers-control></layers-control></div>
<map-legend rows="${us ? '#fff7c6:0 to 5,#fedd86:5 to 10,#feaa38:10 to 15,#ea6e13:15 to 20,#b74202:20 to 25' : '#fff7c6:5 to 10,#fece68:10 to 15,#f5831d:15 to 20,#b74202:20 to 25'}"></map-legend>
<div class="at"><a>${f(50, 'Leaflet')}</a>${f(30, ' | © ')}<a>${f(116, 'OpenStreetMap')}</a>${f(22, ' © ')}<a>${f(62.5, 'CartoDB')}</a></div>
${us ? '' : '<map-popup></map-popup>'}`;
});

/* ---------- data table ---------- */
const COLS = [['', 56.5, 0], ['state', 97.5, 50], ['geoid', 86, 54], ['county', 99.5, 69], ['dm_number', 153.500, 122], ['dm_percent', 151.5, 120], ['dm_low_conf', 165, 134], ['dm_up_conf', 155, 123.5], ['dm_age_adj_pct', 196, 164.500], ['dm_age_adj_low_conf', 254, 223.500], ['dm_age_adj_up_conf', 245, 213]];
const ROWS = [['24', 'Alabama', '01047', '', '5741', '19', '16.5', '21.9', '16.9', '14.5', ''], ['134', 'Arkansas', '05039', '', '860', '14.4', '10.8', '18.4', '11.9', '8.7', '']];
const CW = { Alabama: 83.5, Arkansas: 85.5 };
define('data-table', () => `
<style>
:host{display:flex;flex-direction:column;width:1598px;font-size:20.200px;color:#333}
.top{display:flex;justify-content:space-between;height:37px;font-weight:700;line-height:32px}
.len{display:flex}
.sel{display:flex;box-sizing:border-box;width:69px;height:33px;margin:0 5px 0 4.500px;border:1px solid #a0a0a0;border-radius:2px;background:linear-gradient(#f4f4f4,#dedede);padding:0 7px;justify-content:space-between;line-height:30px}
.srch{display:flex;line-height:36px}
.srch div{box-sizing:border-box;width:251px;height:37px;border:1px solid #a9a9a9;margin-left:12px;padding-left:3.500px;line-height:34px}
.hd{display:flex;height:51px;border-bottom:2px solid #d6d6d6;width:1598px;overflow:hidden;font-weight:700;line-height:32px}
.hd>div{display:flex;flex:none;box-sizing:border-box;padding:9px 8px 0 6px;justify-content:space-between;align-items:center;height:51px;gap:4px}
.hd>div>fit-text{margin:0 auto}
.hd svg{flex:none}
.mid{display:flex;height:134px}
.rows{width:1583px;overflow:hidden;flex:none}
.r{display:flex;height:76px;width:1800px}
.r>div{box-sizing:border-box;flex:none;padding:6px 5.500px 6px 6px;line-height:64px;text-align:right}
.r>div.l{text-align:left}.r>div.c{line-height:32px;padding-left:6.500px}
.vs{display:flex;flex-direction:column;align-items:center;width:15px;height:133px;background:#f1f1f1}
.vs i{width:11px;height:37px;background:#c1c1c1}
.hs{display:flex;align-items:center;width:1583px;height:15px;background:#f1f1f1;justify-content:space-between}
.hs i{height:11px;width:1482px;background:#c1c1c1;margin-right:71px}
.foot{display:flex;justify-content:space-between;border-top:1px solid #d6d6d6}
.foot .info{line-height:32px}
.pg{display:flex;align-items:center;color:#666;margin-top:5px;height:58px;line-height:30px}
.pg>fit-text{margin-top:-2px}
.pg b{font-weight:400;color:#333;box-sizing:border-box;width:59px;height:57px;border:2px solid #979797;border-radius:3px;background:linear-gradient(#fff,#dcdcdc);text-align:center;line-height:51px;margin:0 27px}
</style>
<div class="top"><div class="len">${f(54.5, 'Show')}<div class="sel">${f(24, '10')}<svg width="11" height="31"><path d="M.5 11H10.500L5.500 20Z" fill="#333"/></svg></div>${f(70, 'entries')}</div>
<div class="srch">${f(75, 'Search:')}<div>${f(60, 'dallas')}</div></div></div>
<div class="hd">${COLS.map(([n, w, t], i) => `<div style="width:${w}px">${n ? f(t, n) + '<svg width="12" height="24"><path d="M6 1L12 11.500H0ZM6 23L0 13H12Z" fill="#dcdcdc"/></svg>' : ''}</div>`).join('')}</div>
<div class="mid"><div class="rows">${ROWS.map(r => `<div class="r">${r.map((v, i) => `<div class="${i < 3 ? 'l' : i === 3 ? 'l c' : ''}" style="width:${COLS[i][1]}px">${i === 3 ? f(57.500, 'Dallas') + '<br>' + f(68, 'County') : v ? f(i < 2 && CW[v] || (v.replace('.', '').length * 11.150 + (v.includes('.') ? 5.600 : 0)).toFixed(1), v) : ''}</div>`).join('')}</div>`).join('')}</div>
<div class="vs"><svg width="15" height="15"><path d="M4 10L7.500 6L11 10Z" fill="#a3a3a3"/></svg><i></i><svg width="15" height="15" style="margin-top:66px"><path d="M4 6H11L7.500 10Z" fill="#505050"/></svg></div></div>
<div class="hs"><svg width="15" height="15"><path d="M9 4V11L5 7.500Z" fill="#a3a3a3"/></svg><i></i><svg width="15" height="15"><path d="M6 4V11L10 7.500Z" fill="#505050"/></svg></div>
<div class="foot"><div class="info">${f(554, 'Showing 1 to 5 of 5 entries (filtered from 3,146 total entries)')}</div>
<div class="pg">${f(81.500, 'Previous')}<b>1</b>${f(44, 'Next')}<span style="width:24px"></span></div></div>`);

define('download-bar', () => `
<style>
:host{display:flex;align-items:center;box-sizing:border-box;height:50px;background:#f2f1ef;border-top:1px solid #d2d1ce;font:15px/28px ${UI};color:#4a4a4a;padding:0 12px 0 20px}
.n{margin:-1px 0 0 14px;width:153px}
.sep{width:1px;height:36px;background:#c9c8c5;margin-left:18px}
.all{box-sizing:border-box;width:90px;height:30px;border:1px solid #9c9b99;border-radius:3px;background:#e3e2e0;line-height:26px;text-align:center;margin:-3px 13px 0 auto;-webkit-text-stroke:.3px #4a4a4a}
.fi{margin-top:-3px}.cr{margin-top:-1px}.cx{margin-top:-1px}
</style>
<svg class="fi" width="15" height="18"><path d="M1 1H9L14 6V17H1Z" fill="#e9e8e6" stroke="#8f8e8b"/><path d="M9 1V6H14" fill="#fff" stroke="#8f8e8b"/></svg>
<span class="n">${f(103, '300k_by_8.csv')}</span>
<svg class="cr" width="10" height="8"><path d="M1 6.500L5 2L9 6.500" fill="none" stroke="#7d7c7a" stroke-width="1.700"/></svg>
<span class="sep"></span>
<span class="all">${f(59, 'Show all')}</span>
<svg class="cx" width="11" height="11"><path d="M1 1L10 10M10 1L1 10" stroke="#858482" stroke-width="1.800"/></svg>`);

/* Spread letters once every element is laid out. */
fits.forEach(el => {
  const w = +el.getAttribute('w'), n = el.textContent.length;
  const nat = el.shadowRoot.querySelector('span').getBoundingClientRect().width;
  if (nat) el.style.letterSpacing = ((w - nat) / n).toFixed(3) + 'px';
});
</script>
</body>
</html>
